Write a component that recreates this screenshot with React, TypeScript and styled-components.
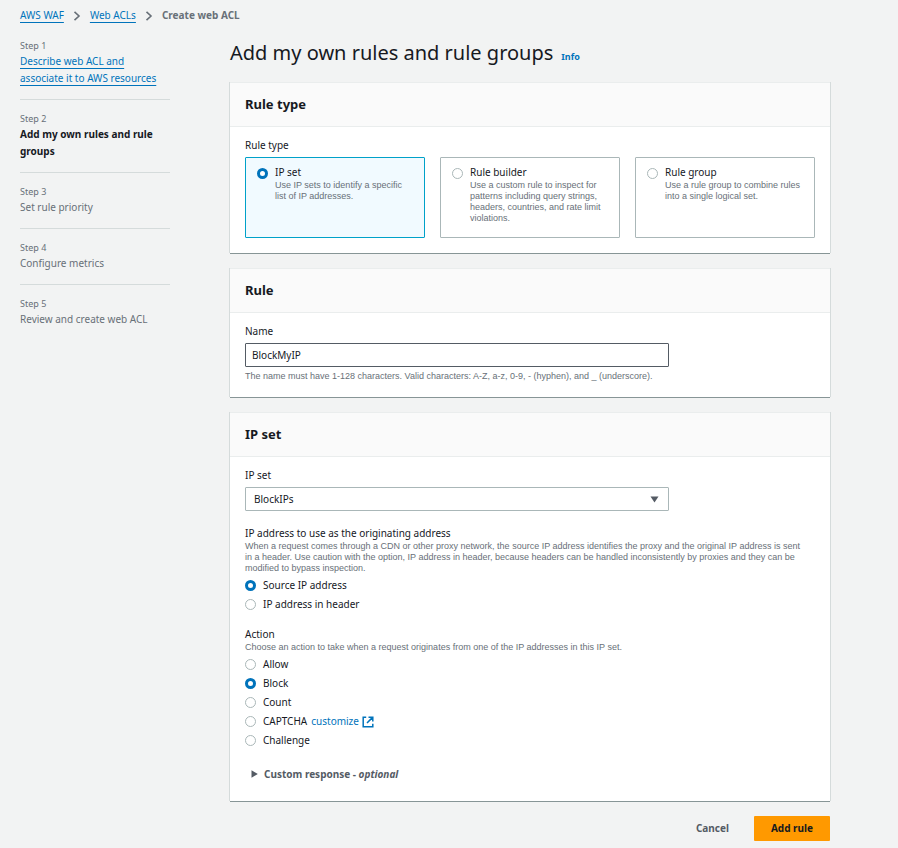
import React, { useState } from 'react';
import styled, { createGlobalStyle, css } from 'styled-components';

const GlobalStyle = createGlobalStyle`
  *, *::before, *::after { box-sizing: border-box; }
  body {
    margin: 0;
    background: #f2f3f3;
    color: #16191f;
    font-family: "Noto Sans", "Open Sans", sans-serif;
    font-size: 10px;
    line-height: 16px;
  }
  button, input, select { font: inherit; color: inherit; }
`;

const Page = styled.div`
  padding: 6px 68px 7px 20px;
`;

const Breadcrumbs = styled.nav`
  display: flex;
  align-items: center;
  gap: 9px;
  height: 18px;
  svg { display: block; margin-top: 2px; }
`;

const TextLink = styled.a`
  color: #0073bb;
  text-decoration: underline;
  text-underline-offset: 3px;
  text-decoration-skip-ink: none;
`;

const Current = styled.span`
  color: #687078;
  font-weight: 700;
`;

const Layout = styled.div`
  display: grid;
  grid-template-columns: 150px minmax(0, 1fr);
  column-gap: 60px;
  align-items: start;
`;

const Steps = styled.ol`
  list-style: none;
  margin: 0;
  padding: 3px 0 0;
`;

const Step = styled.li`
  padding: 12px 0;
  border-bottom: 1px solid #d5dbdb;
  &:last-child { border-bottom: 0; }
`;

const StepLabel = styled.div`
  color: #687078;
  font-size: 9px;
  line-height: 14px;
`;

const StepTitle = styled.div<{ $active?: boolean }>`
  line-height: 17px;
  color: ${(p) => (p.$active ? '#16191f' : '#687078')};
  font-weight: ${(p) => (p.$active ? 700 : 400)};
`;

const Main = styled.main`
  padding-top: 13px;
`;

const Title = styled.h1`
  display: flex;
  align-items: baseline;
  gap: 8px;
  margin: 0;
  padding-bottom: 13px;
  font-size: 20px;
  line-height: 32px;
  font-weight: 400;
`;

const InfoLink = styled.a`
  color: #0073bb;
  font-size: 9px;
  line-height: 11px;
  font-weight: 700;
  text-decoration: none;
`;

const Stack = styled.form`
  display: flex;
  flex-direction: column;
  gap: 15px;
`;

const Panel = styled.section`
  background: #fff;
  border-top: 1px solid #eaeded;
  box-shadow: -1px 0 #d5dbdb, 1px 0 #d5dbdb, 0 1px #879596;
`;

const PanelTitle = styled.h2`
  margin: 0;
  padding: 11px 15px 12px;
  background: #fafafa;
  border-bottom: 1px solid #eaeded;
  font-size: 13px;
  line-height: 20px;
  font-weight: 700;
`;

const PanelBody = styled.div`
  padding: 10px 15px 15px;
`;

const labelStyle = css`
  display: block;
  padding: 0;
  font-size: 10px;
  line-height: 16px;
`;

const Label = styled.label`
  ${labelStyle}
  margin-bottom: 4px;
`;

const Group = styled.fieldset<{ $top?: number }>`
  min-width: 0;
  margin: ${(p) => p.$top || 0}px 0 0;
  padding: 0;
  border: 0;
`;

const Legend = styled.legend`
  ${labelStyle}
`;

const Hint = styled.p`
  margin: 0;
  padding-right: 6px;
  color: #687078;
  font-family: "Liberation Sans", Arial, sans-serif;
  font-size: 9px;
  line-height: 11px;
`;

const Tiles = styled.div`
  display: grid;
  grid-template-columns: repeat(3, minmax(0, 1fr));
  gap: 15px;
  margin-top: 4px;
`;

const Tile = styled.label<{ $selected: boolean }>`
  display: flex;
  align-items: flex-start;
  gap: 7px;
  min-height: 81px;
  padding: 6px 4px 8px 11px;
  border: 1px solid ${(p) => (p.$selected ? '#00a1c9' : '#aab7b8')};
  border-radius: 1px;
  background: ${(p) => (p.$selected ? '#f1faff' : '#fff')};
`;

const RadioDot = styled.input`
  appearance: none;
  flex: none;
  width: 11px;
  height: 11px;
  margin: 0;
  border: 1px solid #aab7b8;
  border-radius: 50%;
  background: #fff;
  &:checked { border: 3px solid #0073bb; }
  ${Tile} & { margin-top: 4px; }
`;

const Field = styled.div`
  width: 75%;
  max-width: 424px;
`;

const TextInput = styled.input`
  display: block;
  width: 100%;
  height: 24px;
  margin: 0 0 4px;
  padding: 0 6px;
  border: 1px solid #545b64;
  border-radius: 1px;
  background: #fff;
`;

const SelectWrap = styled.div`
  display: grid;
  align-items: center;
  > * { grid-area: 1 / 1; }
  > svg { justify-self: end; margin-right: 10px; pointer-events: none; }
`;

const Select = styled.select`
  appearance: none;
  width: 100%;
  height: 24px;
  padding: 0 30px 0 8px;
  border: 1px solid #aab7b8;
  border-radius: 1px;
  background: #fff;
`;

const Options = styled.div`
  margin-top: 2px;
`;

const Option = styled.div`
  display: flex;
  align-items: center;
  gap: 7px;
  line-height: 19px;
`;

const ExternalLink = styled.a`
  display: inline-flex;
  align-items: center;
  gap: 3px;
  margin-left: -3px;
  color: #0073bb;
  text-decoration: none;
`;

const Expander = styled.button`
  display: flex;
  align-items: center;
  gap: 6px;
  margin: 12px 0 0;
  padding: 4px 6px;
  border: 0;
  background: none;
  color: #545b64;
  font-weight: 700;
`;

const Actions = styled.div`
  display: flex;
  justify-content: flex-end;
  gap: 8px;
`;

const Button = styled.button<{ $primary?: boolean }>`
  height: 25px;
  padding: 0 17px 2px;
  border: 0;
  border-radius: 1px;
  background: ${(p) => (p.$primary ? '#ff9900' : 'transparent')};
  color: ${(p) => (p.$primary ? '#16191f' : '#545b64')};
  font-weight: 700;
`;

const Chevron = () => (
  <svg width="8" height="10" viewBox="0 0 8 10" fill="none" stroke="#687078" strokeWidth="1.6" aria-hidden="true">
    <path d="M1.5 0.8 6 5 1.5 9.2" />
  </svg>
);

const ExternalIcon = () => (
  <svg width="12" height="12" viewBox="0 0 12 12" fill="none" stroke="#0073bb" strokeWidth="1.5" aria-hidden="true">
    <path d="M4.2 1.2H1.2v9.6h9.6V7.8M6.5 1.2h4.3v4.3M10.6 1.4 5 7" />
  </svg>
);

const steps = [
  { title: 'Describe web ACL and associate it to AWS resources', link: true },
  { title: 'Add my own rules and rule groups', active: true },
  { title: 'Set rule priority' },
  { title: 'Configure metrics' },
  { title: 'Review and create web ACL' },
];

const ruleTypes = [
  { name: 'IP set', text: 'Use IP sets to identify a specific list of IP addresses.' },
  {
    name: 'Rule builder',
    text: 'Use a custom rule to inspect for patterns including query strings, headers, countries, and rate limit violations.',
  },
  { name: 'Rule group', text: 'Use a rule group to combine rules into a single logical set.' },
];

const sources = ['Source IP address', 'IP address in header'];
const actions = ['Allow', 'Block', 'Count', 'CAPTCHA', 'Challenge'];

type RadioListProps = {
  name: string;
  items: string[];
  value: string;
  onChange: (value: string) => void;
};

function RadioList({ name, items, value, onChange }: RadioListProps) {
  return (
    <Options>
      {items.map((item, i) => (
        <Option key={item}>
          <RadioDot
            type="radio"
            id={`${name}-${i}`}
            name={name}
            checked={value === item}
            onChange={() => onChange(item)}
          />
          <label htmlFor={`${name}-${i}`}>{item}</label>
          {item === 'CAPTCHA' && (
            <ExternalLink href="#customize">
              customize <ExternalIcon />
            </ExternalLink>
          )}
        </Option>
      ))}
    </Options>
  );
}

export default function App() {
  const [ruleType, setRuleType] = useState('IP set');
  const [name, setName] = useState('BlockMyIP');
  const [source, setSource] = useState(sources[0]);
  const [action, setAction] = useState('Block');

  return (
    <Page>
      <GlobalStyle />
      <Breadcrumbs aria-label="Breadcrumbs">
        <TextLink href="#waf">AWS WAF</TextLink>
        <Chevron />
        <TextLink href="#acls">Web ACLs</TextLink>
        <Chevron />
        <Current>Create web ACL</Current>
      </Breadcrumbs>
      <Layout>
        <Steps>
          {steps.map((s, i) => (
            <Step key={s.title}>
              <StepLabel>Step {i + 1}</StepLabel>
              <StepTitle $active={s.active}>
                {s.link ? <TextLink href="#step-1">{s.title}</TextLink> : s.title}
              </StepTitle>
            </Step>
          ))}
        </Steps>
        <Main>
          <Title>
            Add my own rules and rule groups
            <InfoLink href="#info">Info</InfoLink>
          </Title>
          <Stack onSubmit={(e) => e.preventDefault()}>
            <Panel>
              <PanelTitle>Rule type</PanelTitle>
              <PanelBody>
                <Group>
                  <Legend>Rule type</Legend>
                  <Tiles>
                    {ruleTypes.map((t) => (
                      <Tile key={t.name} $selected={ruleType === t.name}>
                        <RadioDot
                          type="radio"
                          name="rule-type"
                          checked={ruleType === t.name}
                          onChange={() => setRuleType(t.name)}
                        />
                        <div>
                          {t.name}
                          <Hint>{t.text}</Hint>
                        </div>
                      </Tile>
                    ))}
                  </Tiles>
                </Group>
              </PanelBody>
            </Panel>

            <Panel>
              <PanelTitle>Rule</PanelTitle>
              <PanelBody>
                <Field>
                  <Label htmlFor="rule-name">Name</Label>
                  <TextInput id="rule-name" value={name} onChange={(e) => setName(e.target.value)} />
                </Field>
                <Hint>
                  The name must have 1-128 characters. Valid characters: A-Z, a-z, 0-9, - (hyphen), and _ (underscore).
                </Hint>
              </PanelBody>
            </Panel>

            <Panel>
              <PanelTitle>IP set</PanelTitle>
              <PanelBody>
                <Field>
                  <Label htmlFor="ip-set">IP set</Label>
                  <SelectWrap>
                    <Select id="ip-set" defaultValue="BlockIPs">
                      <option>BlockIPs</option>
                    </Select>
                    <svg width="9" height="7" viewBox="0 0 9 7" fill="#545b64" aria-hidden="true">
                      <path d="M0.5 0.5h8L4.5 6.5z" />
                    </svg>
                  </SelectWrap>
                </Field>
                <Group $top={14}>
                  <Legend>IP address to use as the originating address</Legend>
                  <Hint>
                    When a request comes through a CDN or other proxy network, the source IP address identifies the
                    proxy and the original IP address is sent in a header. Use caution with the option, IP address in
                    header, because headers can be handled inconsistently by proxies and they can be modified to bypass
                    inspection.
                  </Hint>
                  <RadioList name="source" items={sources} value={source} onChange={setSource} />
                </Group>
                <Group $top={12}>
                  <Legend>Action</Legend>
                  <Hint>
                    Choose an action to take when a request originates from one of the IP addresses in this IP set.
                  </Hint>
                  <RadioList name="action" items={actions} value={action} onChange={setAction} />
                </Group>
                <Expander type="button" aria-expanded={false}>
                  <svg width="7" height="8" viewBox="0 0 7 8" fill="#545b64" aria-hidden="true">
                    <path d="M0.5 0.3v7.4L6.8 4z" />
                  </svg>
                  <span>
                    Custom response - <i>optional</i>
                  </span>
                </Expander>
              </PanelBody>
            </Panel>

            <Actions>
              <Button type="button">Cancel</Button>
              <Button type="submit" $primary>
                Add rule
              </Button>
            </Actions>
          </Stack>
        </Main>
      </Layout>
    </Page>
  );
}
